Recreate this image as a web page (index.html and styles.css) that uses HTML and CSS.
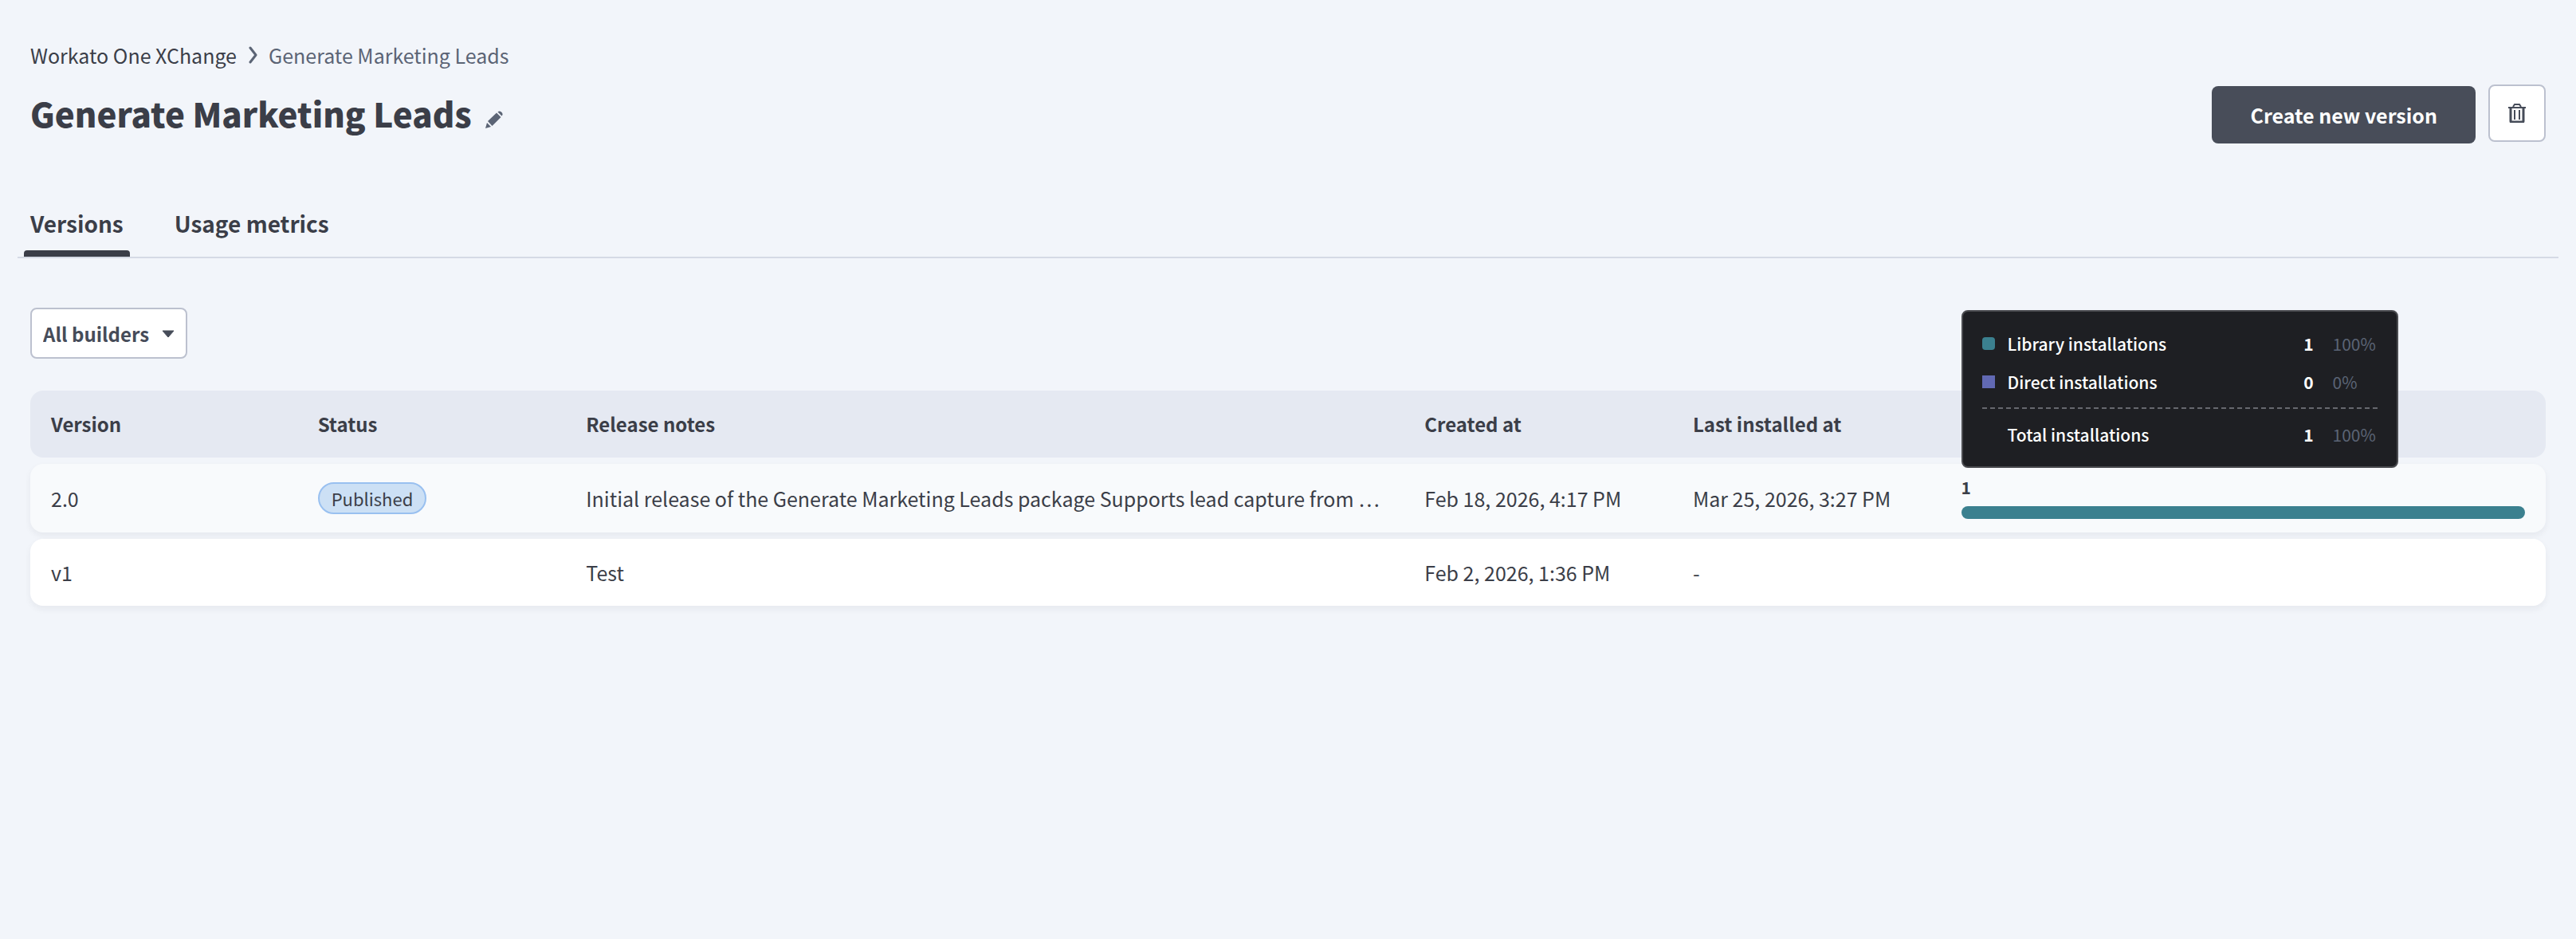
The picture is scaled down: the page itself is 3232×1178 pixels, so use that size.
FILE: index.html
```html
<!DOCTYPE html>
<html lang="en">
<head>
  <meta charset="UTF-8">
  <title>Generate Marketing Leads</title>
  <link rel="stylesheet" href="styles.css">
</head>
<body>
  <div class="page">
    <header class="header">
      <nav class="breadcrumbs">
        <a href="#">Workato One XChange</a>
        <svg width="12" height="22" viewBox="0 0 12 22" aria-hidden="true">
          <path d="M3 2l7 9-7 9" fill="none" stroke="#5b6475" stroke-width="3" stroke-linecap="round" stroke-linejoin="round"/>
        </svg>
        <span>Generate Marketing Leads</span>
      </nav>
      <div class="title-row">
        <h1>Generate Marketing Leads</h1>
        <button class="edit-button" aria-label="Edit name">
          <svg width="22" height="22" viewBox="0 0 22 22" aria-hidden="true">
            <g fill="#5b6475">
              <path d="M0 22l2-7 5 5z"/>
              <path d="M3 13L14 2.500l5.500 5.500L8.500 19z"/>
              <path d="M15.500 1.500q2-2 4.500 0l.5.500q2 2 0 4.500z"/>
            </g>
          </svg>
        </button>
        <button class="create-button">Create new version</button>
        <button class="delete-button" aria-label="Delete">
          <svg width="22" height="24" viewBox="0 0 22 24" aria-hidden="true">
            <path d="M0 5h22M6 4l2-3h6l2 3" fill="none" stroke="#464c59" stroke-width="2"/>
            <path d="M3 5v17q0 1 1 1h14q1 0 1-1V5" fill="none" stroke="#464c59" stroke-width="3"/>
            <path d="M8 8v12M14 8v12" stroke="#464c59" stroke-width="2"/>
          </svg>
        </button>
      </div>
    </header>

    <nav class="tabs">
      <a class="tab active" href="#">Versions</a>
      <a class="tab" href="#">Usage metrics</a>
    </nav>

    <div class="filter">
      <select aria-label="Builders">
        <option>All builders</option>
      </select>
      <svg class="caret" width="16" height="10" viewBox="0 0 16 10" aria-hidden="true">
        <path d="M1 1h14L8 9z" fill="#464c59" stroke="#464c59" stroke-width="1" stroke-linejoin="round"/>
      </svg>
    </div>

    <table class="versions">
      <thead>
        <tr>
          <th>Version</th>
          <th>Status</th>
          <th>Release notes</th>
          <th>Created at</th>
          <th>Last installed at</th>
          <th></th>
        </tr>
      </thead>
      <tbody>
        <tr class="hovered">
          <td>2.0</td>
          <td><span class="badge">Published</span></td>
          <td>Initial release of the Generate Marketing Leads package Supports lead capture from …</td>
          <td>Feb 18, 2026, 4:17 PM</td>
          <td>Mar 25, 2026, 3:27 PM</td>
          <td class="installs-cell">
            <div class="installs">
              <div class="installs-count">1</div>
              <div class="bar"></div>
              <div class="tooltip" role="tooltip">
                <div class="tooltip-row">
                  <span class="swatch library"></span>
                  <span>Library installations</span>
                  <b>1</b>
                  <span class="percent">100%</span>
                </div>
                <div class="tooltip-row">
                  <span class="swatch direct"></span>
                  <span>Direct installations</span>
                  <b>0</b>
                  <span class="percent">0%</span>
                </div>
                <div class="tooltip-line"></div>
                <div class="tooltip-row">
                  <span></span>
                  <span>Total installations</span>
                  <b>1</b>
                  <span class="percent">100%</span>
                </div>
              </div>
            </div>
          </td>
        </tr>
        <tr>
          <td>v1</td>
          <td></td>
          <td>Test</td>
          <td>Feb 2, 2026, 1:36 PM</td>
          <td>-</td>
          <td></td>
        </tr>
      </tbody>
    </table>
  </div>
</body>
</html>
```
FILE: styles.css
```css
* {
  box-sizing: border-box;
}
body {
  margin: 0;
  background-color: #f2f5fa;
  color: #3b3e48;
  font-family: 'Noto Sans CJK SC', 'Noto Sans', sans-serif;
  font-size: 25px;
}
a {
  color: inherit;
  text-decoration: none;
}
button, select {
  font-family: inherit;
  font-size: inherit;
  cursor: pointer;
}
svg {
  display: block;
}
.page {
  padding: 48px 38px;
}

/* header */
.breadcrumbs {
  display: flex;
  align-items: center;
  gap: 14px;
  line-height: 42px;
}
.breadcrumbs span {
  color: #5b6475;
}
.title-row {
  display: flex;
  align-items: flex-start;
  margin-top: 16px;
  height: 74px;
}
h1 {
  margin: 0;
  font-size: 42px;
  font-weight: 900;
  line-height: 72px;
}
.edit-button {
  margin: 33px auto 0 17px;
  padding: 0;
  border: none;
  background: none;
}
.create-button {
  align-self: flex-end;
  height: 72px;
  padding: 0 48px;
  border: none;
  border-radius: 8px;
  background-color: #484d59;
  color: white;
  font-weight: 600;
}
.delete-button {
  display: flex;
  align-items: center;
  justify-content: center;
  width: 72px;
  height: 72px;
  margin-left: 16px;
  border: 2px solid #bcc1cf;
  border-radius: 8px;
  background-color: white;
}

/* tabs */
.tabs {
  display: flex;
  gap: 48px;
  margin: 66px -16px 0;
  padding: 0 8px;
  border-bottom: 2px solid #d5dae5;
}
.tab {
  padding: 0 8px;
  font-size: 28px;
  font-weight: 600;
  line-height: 68px;
}
.tab::after {
  content: "";
  display: block;
  height: 8px;
  margin: 0 -8px;
  border-radius: 4px 4px 0 0;
}
.tab.active::after {
  background-color: #3b3e48;
}

/* filter */
.filter {
  position: relative;
  width: fit-content;
  margin-top: 62px;
}
.filter select {
  appearance: none;
  display: block;
  height: 64px;
  padding: 0 45px 0 14px;
  border: 2px solid #bcc1cf;
  border-radius: 8px;
  background-color: white;
  color: #464c59;
  font-size: 24px;
  font-weight: 600;
}
.caret {
  position: absolute;
  top: 28px;
  right: 16px;
  pointer-events: none;
}

/* table */
.versions, .versions thead, .versions tbody {
  display: block;
}
.versions {
  margin-top: 40px;
}
.versions tr {
  display: grid;
  grid-template-columns: 8fr 8fr 25fr 8fr 8fr 18fr;
  align-items: center;
  min-height: 84px;
  margin-bottom: 8px;
  border-radius: 16px;
  background-color: white;
  box-shadow: 0 4px 8px rgba(30, 40, 50, 0.06);
}
.versions thead tr {
  background-color: #e5e9f2;
  box-shadow: none;
}
.versions tbody tr.hovered {
  background-color: #f8fafc;
}
.versions th, .versions td {
  padding: 0 24px;
  line-height: 40px;
  text-align: left;
  white-space: nowrap;
}
.versions th {
  font-size: 24px;
  font-weight: 600;
}
.versions th:first-child, .versions td:first-child {
  padding-left: 26px;
}
.badge {
  display: block;
  width: fit-content;
  padding: 0 15px;
  border: 2px solid #99c0f0;
  border-radius: 20px;
  background-color: #cce0f5;
  font-size: 22px;
  line-height: 36px;
}
.versions .installs-cell {
  padding: 13px 26px 17px 24px;
}
.installs {
  position: relative;
}
.installs-count {
  margin-bottom: 8px;
  font-size: 21px;
  font-weight: 600;
  line-height: 32px;
}
.bar {
  height: 16px;
  border-radius: 8px;
  background-color: #3b808f;
}

/* tooltip */
.tooltip {
  position: absolute;
  bottom: calc(100% + 8px);
  left: 0;
  width: 548px;
  padding: 16px 24px;
  border: 2px solid #4b4c50;
  border-radius: 8px;
  background-color: #1e1f23;
  color: white;
  font-size: 21px;
  font-weight: 500;
}
.tooltip-row {
  display: grid;
  grid-template-columns: 16px 1fr auto 56px;
  column-gap: 16px;
  align-items: center;
  line-height: 48px;
}
.tooltip-row b {
  margin-right: 8px;
}
.swatch {
  height: 16px;
}
.swatch.library {
  border-radius: 4px;
  background-color: #3b808f;
}
.swatch.direct {
  background-color: #6169b3;
}
.percent {
  color: #5b6475;
  font-weight: 400;
}
.tooltip-line {
  margin: 8px 0;
  border-top: 2px dashed #66686e;
}
```
